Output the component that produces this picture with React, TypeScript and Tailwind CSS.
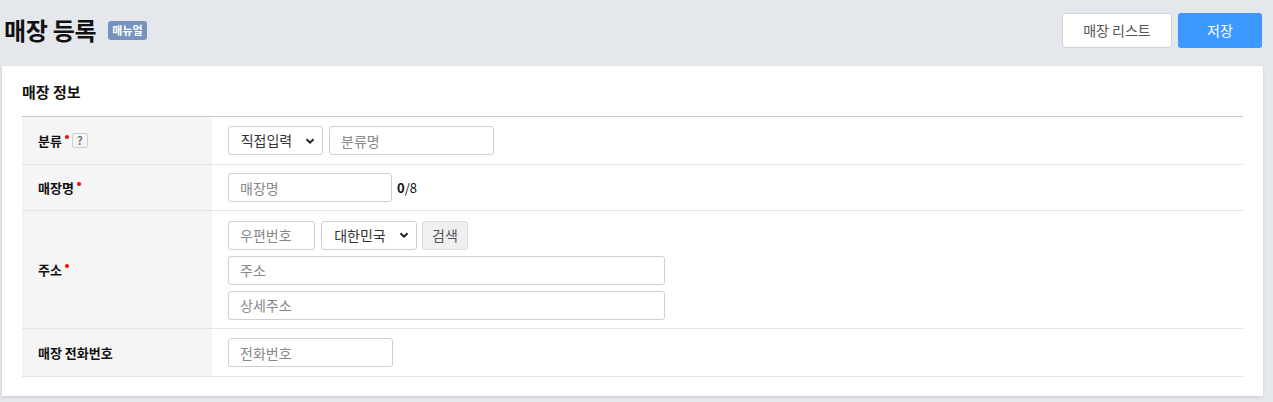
import React from "react";

const font = { fontFamily: '"Noto Sans CJK KR", "Noto Sans", sans-serif' };

function Chevron() {
  return (
    <svg width="10" height="10" viewBox="0 0 10 10" className="absolute right-[7px] top-1/2 -translate-y-1/2 pointer-events-none">
      <path d="M1.5 3.2 L5 6.7 L8.5 3.2" fill="none" stroke="#222" strokeWidth="2" />
    </svg>
  );
}

function Select({ label, w }: { label: string; w: string }) {
  return (
    <div className={`relative h-[29px] ${w} border border-[#cfcfcf] rounded-[3px] bg-white flex items-center justify-center pr-[18px] text-[14px] text-[#333]`}>
      {label}
      <Chevron />
    </div>
  );
}

function Input({ ph, w }: { ph: string; w: string }) {
  return (
    <input
      placeholder={ph}
      className={`h-[29px] ${w} border border-[#cfcfcf] rounded-[3px] bg-white px-[11px] text-[14px] placeholder:text-[#888] outline-none`}
      style={font}
    />
  );
}

function Req() {
  return <span className="ml-[3px] w-[4px] h-[4px] rounded-full bg-[#ff0000] inline-block relative -top-[4px]" />;
}

function Row({ label, children, h }: { label: React.ReactNode; children: React.ReactNode; h: string }) {
  return (
    <div className={`flex border-b border-[#e4e4e4] ${h}`}>
      <div className="w-[190px] shrink-0 bg-[#f5f5f5] flex items-center pl-[16px] text-[13px] font-bold text-[#111]">
        <div className="flex items-center">{label}</div>
      </div>
      <div className="flex-1 pl-[16px] flex flex-col justify-center">{children}</div>
    </div>
  );
}

export default function App() {
  return (
    <div className="w-[1273px] h-[402px] bg-[#e4e7eb] overflow-hidden" style={font}>
      <div className="flex items-start justify-between h-[66px] pl-[4px] pr-[11px]">
        <div className="flex items-center mt-[14px]">
          <h1 className="text-[24px] font-bold text-[#111] leading-[32px] tracking-[-0.3px]">매장 등록</h1>
          <span className="ml-[12px] bg-[#7593bd] text-white text-[11px] font-bold rounded-[3px] px-[4px] h-[19px] leading-[19px]">매뉴얼</span>
        </div>
        <div className="flex gap-[6px] mt-[13px]">
          <button className="w-[110px] h-[35px] bg-white border border-[#d4d4d4] rounded-[3px] text-[14px] text-[#555]">매장 리스트</button>
          <button className="w-[84px] h-[35px] bg-[#3d99ff] rounded-[3px] text-[14px] text-white">저장</button>
        </div>
      </div>
      <div className="ml-[2px] w-[1261px] h-[330px] bg-white shadow-[0_1px_3px_rgba(0,0,0,0.12)] px-[20px]">
        <div className="h-[50px] flex items-center pt-[2px] text-[15px] font-bold text-[#111]">매장 정보</div>
        <div className="border-t border-[#c8c8c8]">
          <Row h="h-[48px]" label={<><span>분류</span><Req /><span className="ml-[3px] w-[16px] h-[15px] border border-[#cfcfcf] rounded-[2px] text-[11px] text-[#777] flex items-center justify-center font-bold">?</span></>}>
            <div className="flex gap-[6px]">
              <Select label="직접입력" w="w-[95px]" />
              <Input ph="분류명" w="w-[165px]" />
            </div>
          </Row>
          <Row h="h-[46px]" label={<><span>매장명</span><Req /></>}>
            <div className="flex items-center gap-[5px]">
              <Input ph="매장명" w="w-[164px]" />
              <span className="text-[13px] text-[#111]"><span className="font-bold">0</span>/8</span>
            </div>
          </Row>
          <Row h="h-[118px]" label={<><span>주소</span><Req /></>}>
            <div className="flex flex-col gap-[6px] pt-[1px]">
              <div className="flex gap-[6px]">
                <Input ph="우편번호" w="w-[87px]" />
                <Select label="대한민국" w="w-[96px]" />
                <button className="h-[29px] w-[46px] -ml-[1px] bg-[#eff0f2] border border-[#dcdcdc] rounded-[3px] text-[14px] text-[#555]">검색</button>
              </div>
              <Input ph="주소" w="w-[437px]" />
              <Input ph="상세주소" w="w-[437px]" />
            </div>
          </Row>
          <Row h="h-[48px]" label="매장 전화번호">
            <Input ph="전화번호" w="w-[165px]" />
          </Row>
        </div>
      </div>
    </div>
  );
}
